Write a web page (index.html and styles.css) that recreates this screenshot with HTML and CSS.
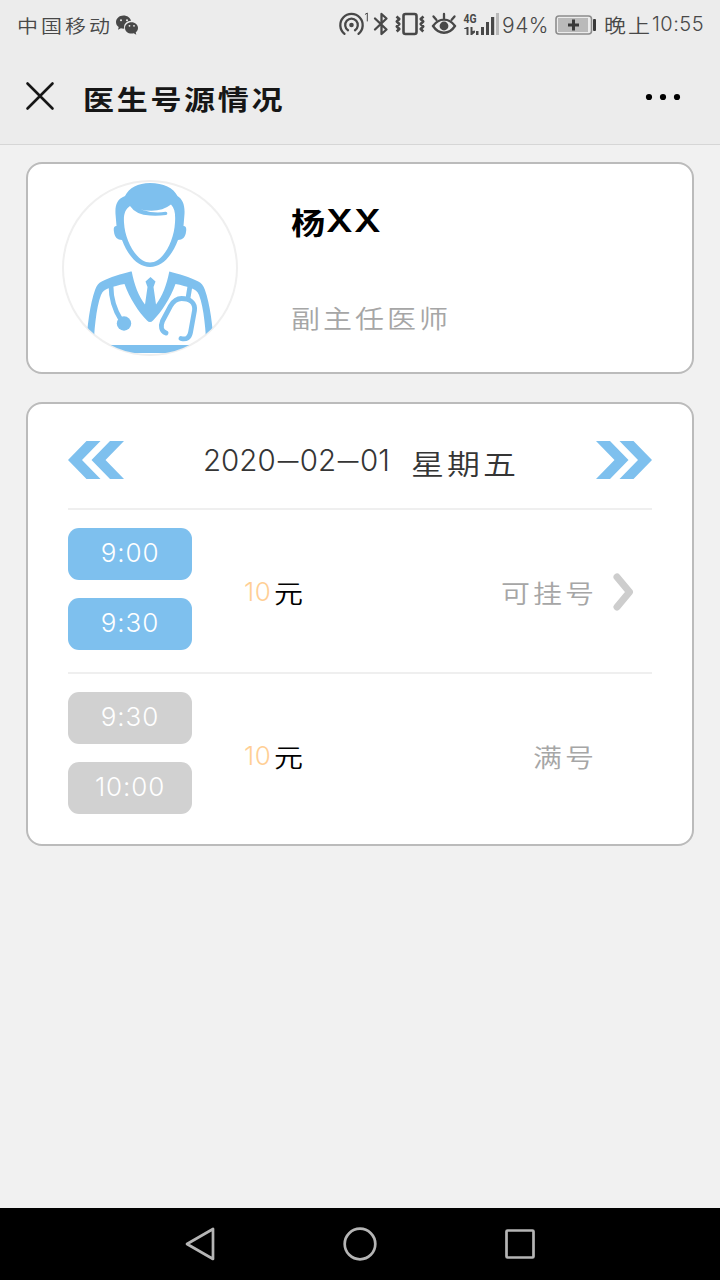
FILE: index.html
```html
<!DOCTYPE html>
<html lang="zh-CN">
<head>
<meta charset="utf-8">
<title>医生号源情况</title>
<link rel="stylesheet" href="styles.css">
</head>
<body>
<div class="screen">
  <div class="status">
    <span class="carrier">中国移动</span>
    <svg class="wechat" width="24" height="22" viewBox="115 14 24 22" fill="#484848">
      <path d="M123.500 15.400c-4.200 0-7.500 2.900-7.500 6.600 0 2.100 1 3.900 2.700 5.100l-.7 2.700 2.900-1.500c.8.2 1.700.4 2.600.4.3 0 .5 0 .8-.1-1.200-4.300 2.400-8.100 6.800-7.900-.8-3.100-3.900-5.300-7.600-5.300z"/>
      <path d="M131.500 22.200c-3.700 0-6.500 2.500-6.500 5.700 0 3.200 2.900 5.700 6.500 5.700.8 0 1.500-.1 2.200-.3l2.600 1.400-.6-2.300c1.400-1.100 2.300-2.700 2.300-4.500 0-3.200-2.900-5.700-6.500-5.700z"/>
      <g fill="#ececec"><circle cx="121" cy="20.300" r="1"/><circle cx="127" cy="20.300" r="1"/><circle cx="129.500" cy="25.800" r=".9"/><circle cx="134" cy="25.800" r=".9"/></g>
    </svg>
    <div class="indicators">
      <svg width="32" height="28" viewBox="338 10 32 28" fill="none" stroke="#484848" stroke-width="2.300" stroke-linecap="round">
        <circle cx="351.500" cy="25" r="2.300" fill="#484848" stroke="none"/>
        <path d="M348 30.200a6.300 6.300 0 1 1 7 0M344.500 33.800a11.200 11.200 0 1 1 14 0"/>
        <path d="M365.300 14.300l2-1.300v8" stroke-width="1"/>
      </svg>
      <svg width="20" height="28" viewBox="370 10 20 28" fill="none" stroke="#484848" stroke-width="2.300" stroke-linejoin="round" stroke-linecap="round">
        <path d="M375 18.500l11.500 11-5 4.500V14l5 4.500-11.500 11"/>
      </svg>
      <svg width="34" height="28" viewBox="393 10 34 28" fill="none" stroke="#484848" stroke-width="2.600" stroke-linejoin="round">
        <rect x="403.500" y="14" width="13" height="20" rx="2"/>
        <path d="M396.500 16.500l2.800 2.500-2.500 2.500 2.500 2.500-2.500 2.500 2.500 2.500-2.600 2.500M423.500 16.500l-2.800 2.500 2.500 2.500-2.500 2.500 2.500 2.500-2.500 2.500 2.600 2.500"/>
      </svg>
      <svg width="28" height="28" viewBox="430 10 28 28" fill="none" stroke="#484848" stroke-width="2.300" stroke-linecap="round">
        <path d="M433 26c6-8.600 16-8.600 22 0-6 9-16 9-22 0z"/>
        <circle cx="444" cy="26" r="4.400" fill="#484848" stroke="none"/>
        <path d="M433.500 16.500l2.800 3.300M444 14v4.500M454.500 16.500l-2.800 3.300"/>
      </svg>
      <svg width="39" height="28" viewBox="462 10 39 28" fill="#484848">
        <text x="463.500" y="22.500" class="net" textLength="13" lengthAdjust="spacingAndGlyphs">4G</text>
        <path d="M464 28.500l3-1.500h1.500v8h-2v-6H464zM470.500 27h2v4l2.500-.5v2l-3 2.500h-1.500zM476 31h2.500v4H476zM481 27h3v8h-3zM486 22h3v13h-3zM491 17h3.200v18H491z"/>
        <path d="M496 13h3v22h-3z" fill="#b9b9b9"/>
      </svg>
    </div>
    <span class="percent">94%</span>
    <svg class="battery" width="42" height="22" viewBox="555 14 42 22">
      <rect x="556" y="16" width="35.500" height="18" rx="3" fill="#ececec" stroke="#8c8c8c" stroke-width="1.600"/>
      <rect x="558" y="18" width="30" height="14" fill="#bababa"/>
      <path d="M568 25h11M573.500 19.500v11" stroke="#383838" stroke-width="3"/>
      <rect x="593" y="19" width="3" height="12" rx="1" fill="#383838"/>
    </svg>
    <span class="ampm">晚上</span><span class="clock">10:55</span>
  </div>

  <div class="titlebar">
    <svg class="close" width="30" height="30" viewBox="0 0 30 30" stroke="#161616" stroke-width="2.600" stroke-linecap="round"><path d="M2.500 2.500l25 25M27.500 2.500l-25 25"/></svg>
    <h1 class="title">医生号源情况</h1>
    <svg class="more" width="36" height="8" viewBox="0 0 36 8"><circle cx="4" cy="4" r="3.100"/><circle cx="18" cy="4" r="3.100"/><circle cx="32" cy="4" r="3.100"/></svg>
  </div>

  <main class="content">
    <section class="card doctor">
      <svg class="avatar" width="176" height="176" viewBox="62 180 176 176">
        <defs><clipPath id="round"><circle cx="150" cy="268" r="86.500"/></clipPath></defs>
        <circle cx="150" cy="268" r="87" fill="#fff" stroke="#efefef" stroke-width="2"/>
        <g clip-path="url(#round)" fill="#7ec0ee">
          <path fill-rule="evenodd" d="M150 183c-12 0-21 5-25 13-8 3-10 9-9.500 18l1 12c-3 0-3 3-2.500 6 .5 5 3.500 8 8 8 6 16 16 27 28 27s22-11 28-27c4.500 0 7.500-3 8-8 .5-3 .5-6-2.500-6l1-12c.5-9-2-15-7-18-4-8-14-13-27.500-13zM130 206q6 9 20 9.500 8 .5 16-.5c2-.3 1.500-3.500-.5-3.200q-12 2-25-2.300 19 4 30.500-5c4 4 4.500 10 4 18-1 19-12 40-25 40s-25-21-26-40c-.5-8 1-13 6-16.500z"/>
          <path d="M130.700 271.500c-9 2.500-21 5.500-29 10-3 1.500-5 4-6.500 8C90 304 87 326 86 350h7.500c.5-18 2.500-42 7.500-55 1.500-4 4-5.500 7-6.500 5-2 11-3.500 16.500-4.500 5 14 14 28 22.500 36.500q3 3 6 0c8.500-8.500 17.500-22.500 22.500-36.500 5.500 1 11.500 2.500 16.500 4.500 3 1 5.500 2.500 7 6.500 5 13 7 37 7.500 55h7.500c-1-24-4-46-9.200-60.500-1.500-4-3.500-6.500-6.500-8-8-4.500-20-7.500-29-10-2.500 13-7 25-13.300 33l-2.500-17.500 2-5.500-5-4.500-5 4.500 2 5.500-2.500 17.500c-6.300-8-10.800-20-13.300-33z"/>
          <path d="M90 345h122v8H90z"/>
          <circle cx="124" cy="323.500" r="7.200"/>
          <g fill="none" stroke="#7ec0ee" stroke-width="4.800" stroke-linecap="round" stroke-linejoin="round">
            <path d="M111 286c0 13 3 23 10 34M190 286l-2 12M166 333c-5-2-5.500-7-3.500-12l8-15c3-5 6-7.500 11-7.500 8 0 14 4 13 12l-4 22c-1 5-4 7.500-9.500 6"/>
          </g>
        </g>
      </svg>
      <div class="bio">
        <h2 class="name"><span class="surname">杨</span><span class="masked">XX</span></h2>
        <p class="rank">副主任医师</p>
      </div>
    </section>

    <section class="card schedule">
      <div class="day">
        <svg width="56" height="38" viewBox="0 0 56 38" fill="#7ec0ee"><path d="M0 19L18.500 0h14L14 19l18.500 19h-14zM23.500 19L42 0h14L37.500 19 56 38H42z"/></svg>
        <div class="date"><span class="num">2020<span class="dash">–</span>02<span class="dash">–</span>01</span><span class="weekday">星期五</span></div>
        <svg width="56" height="38" viewBox="0 0 56 38" fill="#7ec0ee"><path d="M56 19L37.500 0h-14L42 19 23.500 38h14zM32.500 19L14 0H0l18.500 19L0 38h14z"/></svg>
      </div>
      <div class="slot">
        <div class="times"><span class="time">9:00</span><span class="time">9:30</span></div>
        <div class="price"><span class="amount">10</span><span class="unit">元</span></div>
        <span class="state">可挂号</span>
        <svg class="arrow" width="22" height="40" viewBox="0 0 22 40" fill="none" stroke="#cdcdcd" stroke-width="7" stroke-linecap="round" stroke-linejoin="round"><path d="M4 5l12.500 15L4 35"/></svg>
      </div>
      <div class="slot full">
        <div class="times"><span class="time">9:30</span><span class="time">10:00</span></div>
        <div class="price"><span class="amount">10</span><span class="unit">元</span></div>
        <span class="state">满号</span>
      </div>
    </section>
  </main>

  <nav class="keys">
    <svg width="34" height="36" viewBox="0 0 34 36"><path d="M4 18L30 3v30z"/></svg>
    <svg width="34" height="36" viewBox="0 0 34 36"><circle cx="17" cy="18" r="15.300"/></svg>
    <svg width="34" height="36" viewBox="0 0 34 36"><rect x="3.500" y="4.500" width="27" height="27" rx="1"/></svg>
  </nav>
</div>
</body>
</html>
```
FILE: styles.css
```css
* { box-sizing: border-box; margin: 0; padding: 0; }
body { background: #f1f1f1; font-family: Inter, "Noto Sans CJK SC", sans-serif; }
svg { display: block; flex: none; }
.screen { width: 720px; height: 1280px; display: flex; flex-direction: column; }

.carrier, .ampm, .title, .surname, .rank, .weekday, .unit, .state {
  display: block;
  font-family: "Noto Sans CJK SC", sans-serif;
  font-weight: 350;
  white-space: nowrap;
  transform: scaleY(.87);
}

.status { height: 48px; display: flex; align-items: center; background: #ececec; color: #484848; padding: 2px 0 0 17px; line-height: 28px; white-space: nowrap; }
.carrier { width: 98px; font-size: 21px; letter-spacing: 3px; }
.wechat { margin-top: -1px; }
.indicators { display: flex; margin: -2px 0 0 199px; }
.indicators svg:nth-child(3), .indicators svg:nth-child(4) { margin-left: 3px; }
.indicators svg:nth-child(5) { margin-left: 4px; }
.net { font: 700 12px Roboto, sans-serif; }
.percent { width: 53px; padding-left: 1px; font-size: 21px; font-weight: 300; letter-spacing: .5px; margin-top: 1px; }
.battery { margin-left: 1px; margin-top: -1px; }
.ampm { width: 56px; padding-left: 7px; font-size: 22px; letter-spacing: 2px; margin-top: -2px; }
.clock { font-size: 20px; font-weight: 300; letter-spacing: .5px; margin-top: -2px; margin-left: -1px; }

.titlebar { height: 97px; display: flex; align-items: center; padding: 0 37px 0 25px; background: #ececec; border-bottom: 1px solid #d6d6d6; }
.title { margin: 5px 0 0 28px; font-size: 31px; font-weight: 700; letter-spacing: 2.700px; line-height: 40px; color: #161616; }
.more { margin: 2px 2px 0 auto; }

.content { flex: 1; display: flex; flex-direction: column; gap: 28px; padding: 17px 26px 0; }
.card { background: #fff; border: 2px solid #bbb; border-radius: 16px; }
.doctor { height: 212px; display: flex; padding: 16px 34px; }
.bio { margin-left: 53px; padding-top: 20px; }
.name { display: flex; align-items: center; height: 44px; font-size: 34px; line-height: 44px; color: #000; }
.surname { width: 35px; font-weight: 700; }
.masked { font-size: 31px; font-weight: 600; letter-spacing: 1px; transform: scaleX(1.200); transform-origin: left; margin-top: -2px; }
.rank { margin-top: 51px; font-size: 29px; line-height: 44px; letter-spacing: 3px; color: #a6a6a6; }

.schedule { height: 444px; padding: 0 40px; }
.day { height: 106px; display: flex; justify-content: space-between; align-items: center; padding-top: 8px; border-bottom: 2px solid #efefef; color: #353535; }
.date { display: flex; align-items: center; line-height: 44px; margin-left: 2px; }
.num { width: 208px; font-size: 29.500px; font-weight: 300; white-space: nowrap; }
.dash { display: inline-block; width: 24px; text-align: center; transform: scaleX(1.400); }
.weekday { font-size: 33px; letter-spacing: 3px; margin-top: 6px; }
.slot { height: 164px; display: flex; padding-top: 18px; border-bottom: 2px solid #efefef; }
.full { border-bottom: 0; }
.times { width: 124px; display: flex; flex-direction: column; gap: 18px; }
.time { height: 52px; border-radius: 11px; background: #7ec0ee; color: #fff; font-size: 26px; font-weight: 300; letter-spacing: .9px; line-height: 50px; text-align: center; }
.full .time { background: #d1d1d1; }
.price { width: 150px; margin-left: 52px; display: flex; height: 128px; align-items: center; line-height: 44px; }
.amount { width: 30px; color: #ffcf95; font-size: 26px; font-weight: 300; letter-spacing: .5px; }
.unit { font-size: 29px; color: #000; }
.state { width: 203px; margin-top: 42px; height: 44px; line-height: 44px; text-align: right; font-size: 29px; letter-spacing: 3px; color: #a6a6a6; }
.arrow { margin: 44px 0 0 16px; }

.keys { height: 72px; background: #000; display: flex; justify-content: center; align-items: center; gap: 126px; }
.keys svg { fill: none; stroke: #b5b5b5; stroke-width: 2.700; stroke-linejoin: round; }
```
